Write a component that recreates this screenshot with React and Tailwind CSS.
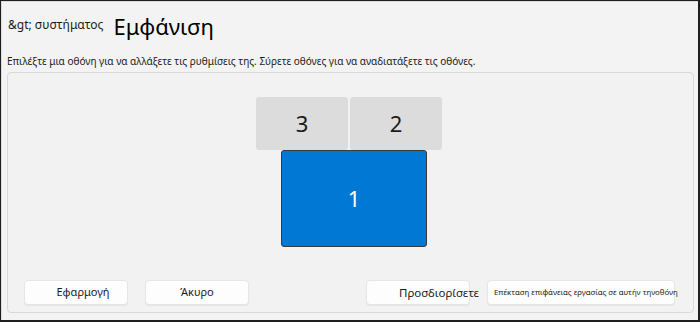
const Monitor = ({ label, className }) => (
  <div
    className={`flex items-center justify-center rounded-[3px] text-[22px] ${className}`}
  >
    {label}
  </div>
);

const Btn = ({ children, className }) => (
  <button
    className={`h-[25px] rounded-[4px] border border-[#e6e6e6] bg-[#fdfdfd] shadow-[0_1px_1px_rgba(0,0,0,0.06)] text-[#1b1b1b] ${className}`}
  >
    {children}
  </button>
);

export default function App() {
  return (
    <div
      className="w-[700px] h-[322px] bg-[#f3f3f3] border-t border-l border-r-2 border-b-2 border-[#1e1e1e] overflow-hidden"
      style={{ fontFamily: '"Noto Sans", "DejaVu Sans", sans-serif' }}
    >
      <div className="h-full border-t border-l border-[#dcdcdc] flex flex-col">
        <div className="flex items-end pl-[6px] pt-[7px] h-[38px]">
          <span className="text-[12px] text-[#1b1b1b] mb-[6px]">&amp;gt; συστήματος</span>
          <span className="text-[22px] leading-[28px] text-black ml-[10px]">Εμφάνιση</span>
        </div>
        <div className="pl-[5px] mt-[14px] text-[10px] leading-[14px] text-[#1b1b1b]">
          Επιλέξτε μια οθόνη για να αλλάξετε τις ρυθμίσεις της. Σύρετε οθόνες για να αναδιατάξετε τις οθόνες.
        </div>
        <div className="ml-[5px] mt-[4px] w-[687px] h-[241px] rounded-[4px] border border-[#d9d9d9] bg-[#f2f2f2] flex flex-col">
          <div className="flex flex-col items-center pt-[24px] pr-[3px]">
            <div className="flex gap-[2px]">
              <Monitor label="3" className="w-[92px] h-[53px] bg-[#dcdcdc] text-[#1b1b1b]" />
              <Monitor label="2" className="w-[92px] h-[53px] bg-[#dcdcdc] text-[#1b1b1b]" />
            </div>
            <div className="w-[186px] flex justify-start pl-[25px]">
              <Monitor
                label="1"
                className="w-[146px] h-[97px] bg-[#0078d4] border border-[#3a3a3a] text-white"
              />
            </div>
          </div>
          <div className="flex mt-[33px] pl-[16px] text-[11px]">
            <Btn className="w-[104px] pl-[14px]">Εφαρμογή</Btn>
            <Btn className="w-[104px] ml-[17px]">Άκυρο</Btn>
            <Btn className="w-[104px] ml-[117px] text-[11.5px] pl-[32px] text-left overflow-visible whitespace-nowrap">
              Προσδιορίσετε
            </Btn>
            <Btn className="w-[188px] ml-[17px] text-[7.8px] whitespace-nowrap pl-[6px] text-left">
              Επέκταση επιφάνειας εργασίας σε αυτήν τηνοθόνη
            </Btn>
          </div>
        </div>
      </div>
    </div>
  );
}
